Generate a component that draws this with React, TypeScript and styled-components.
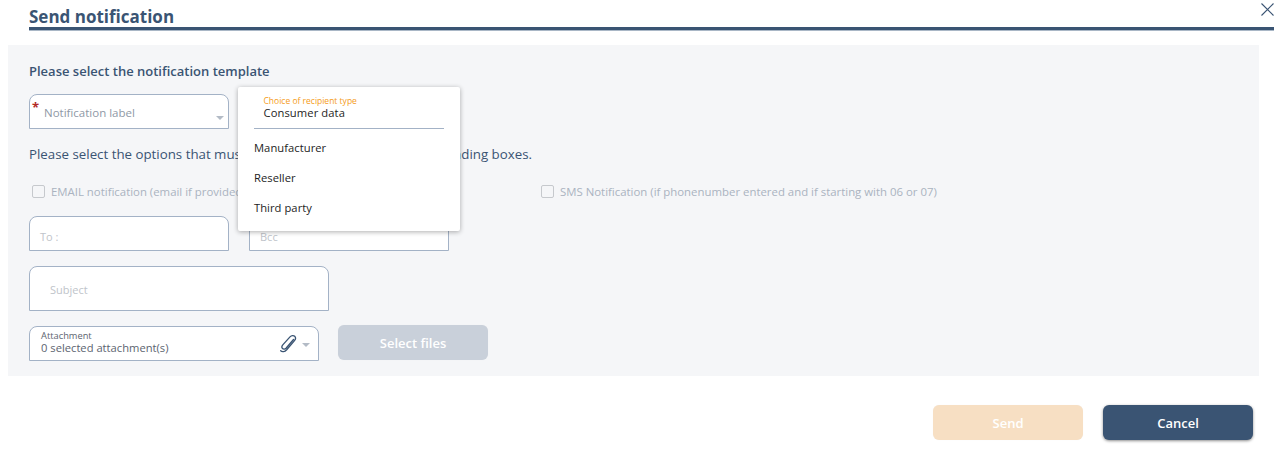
import React from "react";
import styled, { createGlobalStyle } from "styled-components";

const Global = createGlobalStyle`
  html, body { margin: 0; padding: 0; background: #fff; }
  body { font-family: "Open Sans", "Noto Sans", sans-serif; width: 1274px; height: 464px; overflow: hidden; }
  * { box-sizing: border-box; }
`;

const Dialog = styled.div`
  position: relative;
  width: 1274px;
  height: 464px;
  padding-top: 5px;
`;
const Header = styled.div`
  margin-left: 29px;
  height: 25px;
  border-bottom: 3px solid #3a5473;
  box-shadow: 0 1px 0 #a9b7c6;
`;
const Title = styled.h1`
  margin: 0;
  font-size: 17px;
  line-height: 23px;
  font-weight: 700;
  color: #3a5473;
`;
const Close = styled.svg`
  position: absolute;
  top: 3px;
  right: 0;
  width: 13px;
  height: 13px;
  stroke: #3a5473;
  stroke-width: 1.1;
  fill: none;
`;
const Panel = styled.section`
  margin: 15px 15px 0 8px;
  height: 331px;
  background: #f5f6f8;
  padding: 18px 21px 0;
  display: flex;
  flex-direction: column;
  align-items: flex-start;
`;
const Heading = styled.div`
  font-size: 13px;
  line-height: 17px;
  font-weight: 600;
  color: #3a5473;
`;
const Line = styled.div`
  margin-top: 17px;
  font-size: 13.3px;
  line-height: 17px;
  color: #3a5473;
  white-space: nowrap;
`;
const Row = styled.div<{ $top: number; $gap?: number }>`
  display: flex;
  align-items: flex-start;
  margin-top: ${(p) => p.$top}px;
  gap: ${(p) => p.$gap ?? 20}px;
`;
const Field = styled.div<{ $w: number; $h: number }>`
  position: relative;
  width: ${(p) => p.$w}px;
  height: ${(p) => p.$h}px;
  background: #fff;
  border: 1px solid #a3b2c6;
  border-radius: 8px 8px 0 0;
  flex: none;
`;
const Required = styled.span`
  position: absolute;
  left: 2px;
  top: 5px;
  color: #b32a25;
  font-size: 13px;
  line-height: 14px;
  font-weight: 700;
`;
const SelectLabel = styled.span`
  position: absolute;
  left: 14px;
  top: 10px;
  font-size: 11.5px;
  line-height: 16px;
  color: #8f99a6;
`;
const Caret = styled.span<{ $right: number; $top: number }>`
  position: absolute;
  right: ${(p) => p.$right}px;
  top: ${(p) => p.$top}px;
  width: 0;
  height: 0;
  border-left: 4px solid transparent;
  border-right: 4px solid transparent;
  border-top: 4px solid #b3bbc6;
`;
const CheckRow = styled.div`
  margin-top: 20px;
  height: 17px;
  display: flex;
  align-items: center;
`;
const Check = styled.label<{ $w: number }>`
  width: ${(p) => p.$w}px;
  display: flex;
  align-items: center;
  gap: 6px;
  padding-left: 3px;
  font-size: 11.4px;
  line-height: 17px;
  color: #aab3c0;
  white-space: nowrap;
`;
const Box = styled.span`
  width: 13px;
  height: 13px;
  border: 1.5px solid #c6c9cd;
  border-radius: 2px;
  background: #f5f6f8;
  flex: none;
`;
const Placeholder = styled.span<{ $left: number; $top: number }>`
  position: absolute;
  left: ${(p) => p.$left}px;
  top: ${(p) => p.$top}px;
  font-size: 11px;
  line-height: 15px;
  color: #c0c4ca;
`;
const SmallLabel = styled.span`
  position: absolute;
  left: 11px;
  top: 3px;
  font-size: 9.3px;
  line-height: 12px;
  color: #5c6470;
`;
const Value = styled.span`
  position: absolute;
  left: 11px;
  top: 13px;
  font-size: 11.2px;
  line-height: 16px;
  color: #5c6470;
`;
const Clip = styled.svg`
  position: absolute;
  right: 21px;
  top: 7px;
  width: 18px;
  height: 20px;
  fill: none;
  stroke: #3a5473;
  stroke-width: 1.3;
  stroke-linecap: round;
`;
const Button = styled.button<{ $bg: string; $raised?: boolean; $lift?: boolean }>`
  width: 150px;
  height: 35px;
  border: 0;
  border-radius: 6px;
  padding: 0;
  margin-top: ${(p) => (p.$lift ? "-1px" : "0")};
  background: ${(p) => p.$bg};
  color: #fff;
  font-family: inherit;
  font-size: 13px;
  font-weight: 600;
  box-shadow: ${(p) => (p.$raised ? "0 1px 3px rgba(0,0,0,.45)" : "0 0 1px rgba(0,0,0,.06)")};
`;
const Footer = styled.div`
  display: flex;
  justify-content: flex-end;
  gap: 20px;
  margin: 29px 21px 0 0;
`;
const Menu = styled.div`
  position: absolute;
  left: 238px;
  top: 87px;
  width: 222px;
  height: 144px;
  background: #fff;
  border-radius: 2px;
  box-shadow: 0 1px 5px rgba(0, 0, 0, 0.32);
  padding: 0 16px;
`;
const MenuHead = styled.div`
  height: 42px;
  border-bottom: 1px solid #a3b2c6;
  padding: 9px 0 0 9.5px;
`;
const MenuLabel = styled.div`
  font-size: 8.5px;
  line-height: 10px;
  color: #f59c1a;
`;
const MenuValue = styled.div`
  font-size: 11.2px;
  line-height: 14px;
  letter-spacing: 0.1px;
  color: #1d1d1d;
`;
const MenuList = styled.ul`
  list-style: none;
  margin: 4px 0 0;
  padding: 0;
`;
const MenuItem = styled.li`
  height: 30px;
  font-size: 11.2px;
  line-height: 30px;
  letter-spacing: 0.05px;
  color: #1d1d1d;
`;

export default function App() {
  return (
    <Dialog>
      <Global />
      <Header>
        <Title>Send notification</Title>
      </Header>
      <Close viewBox="0 0 13 13">
        <path d="M.5.5L12.5 12.5M12.5.5L.5 12.5" />
      </Close>
      <Panel>
        <Heading>Please select the notification template</Heading>
        <Row $top={14}>
          <Field $w={200} $h={35}>
            <Required>*</Required>
            <SelectLabel>Notification label</SelectLabel>
            <Caret $right={4} $top={21} />
          </Field>
          <Field $w={200} $h={35} />
        </Row>
        <Line>Please select the options that must be sent by checking the corresponding boxes.</Line>
        <CheckRow>
          <Check $w={509}>
            <Box />
            EMAIL notification (email if provided)
          </Check>
          <Check $w={420}>
            <Box />
            SMS Notification (if phonenumber entered and if starting with 06 or 07)
          </Check>
        </CheckRow>
        <Row $top={16}>
          <Field $w={200} $h={35}>
            <Placeholder $left={10} $top={12}>To :</Placeholder>
          </Field>
          <Field $w={200} $h={35}>
            <Placeholder $left={10} $top={12}>Bcc</Placeholder>
          </Field>
        </Row>
        <Row $top={15}>
          <Field $w={300} $h={45}>
            <Placeholder $left={20} $top={15}>Subject</Placeholder>
          </Field>
        </Row>
        <Row $top={15} $gap={19}>
          <Field $w={290} $h={35}>
            <SmallLabel>Attachment</SmallLabel>
            <Value>0 selected attachment(s)</Value>
            <Clip viewBox="0 0 18 20">
              <path d="M14.5 5.5L7 14.2c-1 1.1-2.6 1.2-3.5.3-.9-.9-.7-2.4.3-3.6l7.2-8c1.5-1.6 3.6-1.7 4.7-.6 1.1 1.1 1 3-.4 4.6l-7.6 8.8c-2 2.2-4.6 2.5-6 1.1" />
            </Clip>
            <Caret $right={8} $top={16} />
          </Field>
          <Button $bg="#c9d0da" $lift>Select files</Button>
        </Row>
      </Panel>
      <Footer>
        <Button $bg="#f7dfc3">Send</Button>
        <Button $bg="#3a5473" $raised>Cancel</Button>
      </Footer>
      <Menu>
        <MenuHead>
          <MenuLabel>Choice of recipient type</MenuLabel>
          <MenuValue>Consumer data</MenuValue>
        </MenuHead>
        <MenuList>
          <MenuItem>Manufacturer</MenuItem>
          <MenuItem>Reseller</MenuItem>
          <MenuItem>Third party</MenuItem>
        </MenuList>
      </Menu>
    </Dialog>
  );
}
